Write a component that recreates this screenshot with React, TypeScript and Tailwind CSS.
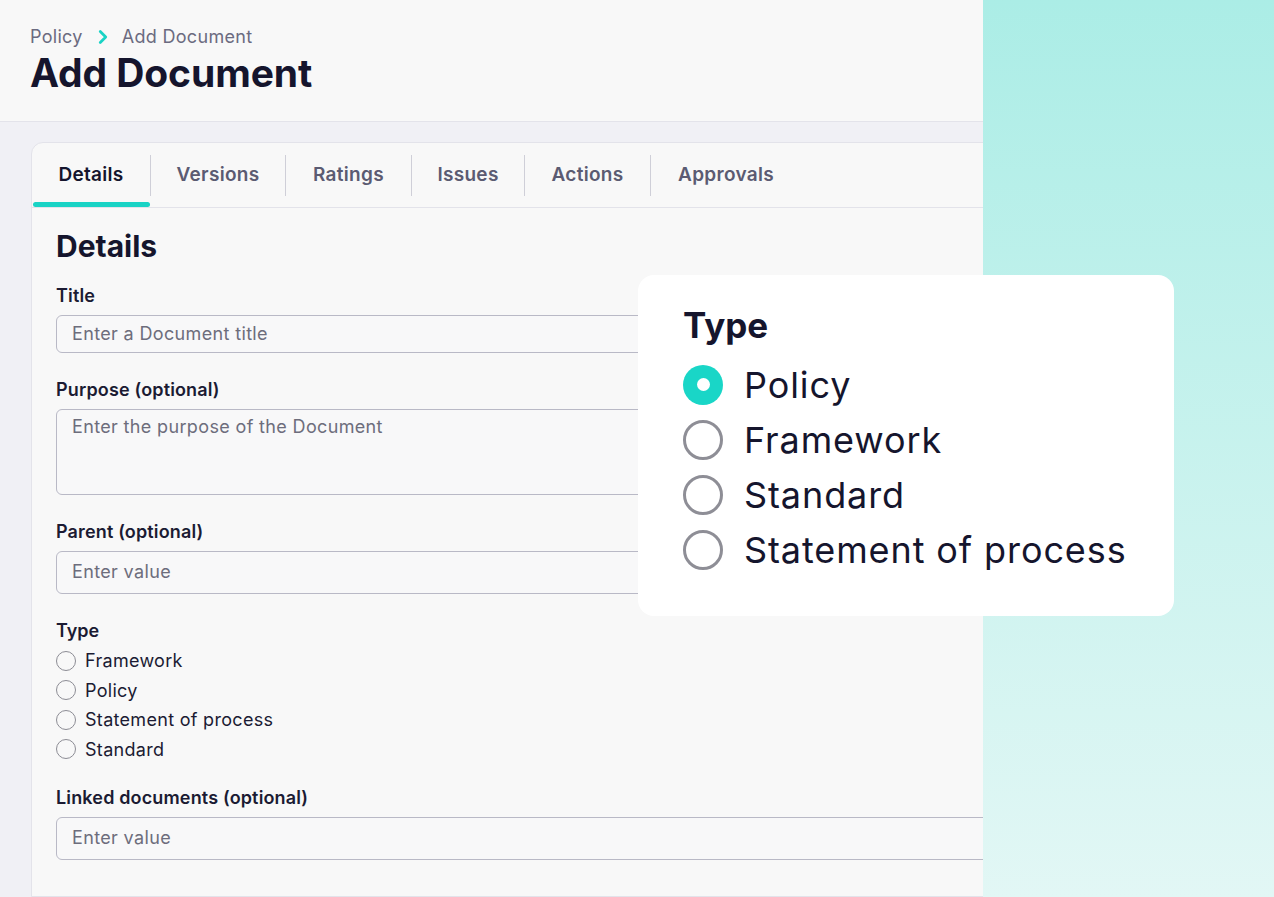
import { ChevronRight } from 'lucide-react';

const tabs = [
  { label: 'Details', w: 'w-[118px]' },
  { label: 'Versions', w: 'w-[134px]' },
  { label: 'Ratings', w: 'w-[125px]' },
  { label: 'Issues', w: 'w-[112px]' },
  { label: 'Actions', w: 'w-[125px]' },
  { label: 'Approvals', w: 'w-[150px]' },
];
const smallTypes = ['Framework', 'Policy', 'Statement of process', 'Standard'];
const bigTypes = ['Policy', 'Framework', 'Standard', 'Statement of process'];

function Field({ label, placeholder, h }: { label: string; placeholder: string; h: string }) {
  return (
    <div className="flex flex-col">
      <label className="text-[18px] leading-[24px] font-semibold tracking-[0.15px] text-[#1b1b33]">{label}</label>
      <div
        className={`mt-[7px] ${h} w-full rounded-[6px] border-[1.5px] border-[#b9b9c6] bg-[#f8f8f9] px-[15px] text-[18px] leading-[24px] tracking-[0.35px] text-[#6d6d7c]`}
      >
        {placeholder}
      </div>
    </div>
  );
}

export default function App() {
  return (
    <div
      className="relative flex h-[897px] w-[1274px] overflow-hidden"
      style={{ fontFamily: 'Inter, "Noto Sans", sans-serif' }}
    >
      {/* App area */}
      <div className="flex w-[983px] shrink-0 flex-col overflow-hidden bg-[#f0f0f5]">
        <header className="h-[122px] shrink-0 border-b border-[#e3e3ea] bg-[#f8f8f8] px-[30px] pt-[25px]">
          <div className="flex items-center text-[18px] leading-[24px] tracking-[0.3px] text-[#6b6b80]">
            <span>Policy</span>
            <ChevronRight className="ml-[9px] mr-[8px] h-[22px] w-[22px] text-[#19d3c5]" strokeWidth={3} />
            <span>Add Document</span>
          </div>
          <h1 className="mt-[1px] text-[39px] leading-[46px] font-bold tracking-[-0.1px] text-[#15152d]">
            Add Document
          </h1>
        </header>

        <div className="flex-1 pl-[31px] pt-[20px]">
          <div className="h-full w-[1100px] rounded-tl-[12px] border border-[#e3e3ea] bg-[#f8f8f8]">
            {/* Tabs */}
            <div className="flex h-[65px] border-b border-[#e3e3ea]">
              {tabs.map((t, i) => (
                <div key={t.label} className="flex items-stretch">
                  <div className={`relative flex ${t.w} items-center justify-center`}>
                    <span
                      className={`text-[19px] font-semibold tracking-[0.3px] ${i === 0 ? 'text-[#15152d]' : 'text-[#5b5b72]'}`}
                    >
                      {t.label}
                    </span>
                    {i === 0 && (
                      <span className="absolute bottom-0 left-[1px] right-0 h-[5px] rounded-full bg-[#19d3c5]" />
                    )}
                  </div>
                  {i < tabs.length - 1 && <div className="h-[41px] w-px self-center bg-[#cfcfd8]" />}
                </div>
              ))}
            </div>

            {/* Form */}
            <div className="w-[1000px] px-[24px] pt-[21px]">
              <h2 className="text-[30px] leading-[34px] font-bold text-[#15152d]">Details</h2>
              <div className="mt-[21px]">
                <Field label="Title" placeholder="Enter a Document title" h="h-[38px] pt-[6px]" />
              </div>
              <div className="mt-[25px]">
                <Field label="Purpose (optional)" placeholder="Enter the purpose of the Document" h="h-[86px] pt-[5px]" />
              </div>
              <div className="mt-[25px]">
                <Field label="Parent (optional)" placeholder="Enter value" h="h-[43px] pt-[8px]" />
              </div>

              <div className="mt-[25px]">
                <div className="text-[18px] leading-[24px] font-semibold text-[#1b1b33]">Type</div>
                <div className="mt-[3px] flex flex-col">
                  {smallTypes.map((t) => (
                    <div key={t} className="flex h-[29.5px] items-center gap-[9px]">
                      <span className="h-[20px] w-[20px] rounded-full border-[1.5px] border-[#8c8c94]" />
                      <span className="text-[18px] tracking-[0.3px] text-[#1b1b33]">{t}</span>
                    </div>
                  ))}
                </div>
              </div>

              <div className="mt-[22px]">
                <Field label="Linked documents (optional)" placeholder="Enter value" h="h-[43px] pt-[8px]" />
              </div>
            </div>
          </div>
        </div>
      </div>

      {/* Teal side panel */}
      <div className="flex-1 bg-gradient-to-b from-[#abede6] to-[#e2f7f5]" />

      {/* Floating type card */}
      <div className="absolute left-[638px] top-[275px] h-[341px] w-[536px] rounded-[16px] bg-white pl-[45px] pt-[30px]">
        <div className="text-[35px] leading-[40px] font-bold text-[#15152d]">Type</div>
        <div className="mt-[12px] flex flex-col">
          {bigTypes.map((t, i) => (
            <div key={t} className="flex h-[55px] items-center gap-[21px]">
              {i === 0 ? (
                <span className="flex h-[40px] w-[40px] items-center justify-center rounded-full bg-[#19d6c7]">
                  <span className="h-[13px] w-[13px] rounded-full bg-white" />
                </span>
              ) : (
                <span className="h-[40px] w-[40px] rounded-full border-[3px] border-[#8e8e96]" />
              )}
              <span className="text-[36px] leading-[40px] tracking-[0.9px] text-[#15152d]">{t}</span>
            </div>
          ))}
        </div>
      </div>
    </div>
  );
}
